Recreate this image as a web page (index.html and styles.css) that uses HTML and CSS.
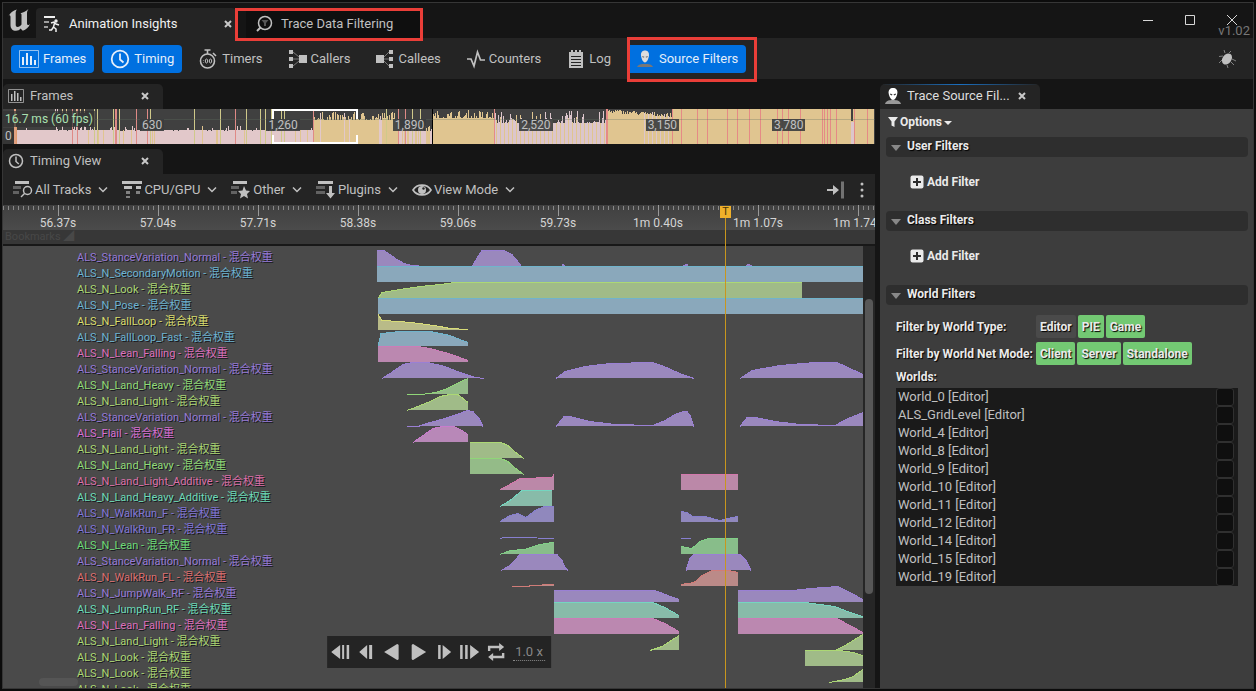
FILE: index.html
```html
<!DOCTYPE html>
<html lang="en">
<head>
<meta charset="utf-8">
<title>Animation Insights</title>
<link rel="stylesheet" href="styles.css">
</head>
<body>
<div class="window">
  <header class="titlebar">
    <svg class="logo" viewBox="0 0 24 24" aria-label="Unreal Engine"><path d="M1.500 8.500C3 5 6 2.500 10 1.500C8.700 3 8.700 4 8.700 5.500V16.500C8.700 18.300 9.500 19 10.600 19C12 19 13.500 18 14.500 16.500V7C14.500 6 14.200 5.500 13.200 5.500C15.500 4.800 18.500 3.500 21.500 1C20.500 2.500 20 3.500 20 5V15C20 16.500 20.500 17 21.200 17C22 17 22.500 16.500 23 16C21.500 19.500 19 21.800 15.800 22.800L13.500 20.600C12.500 22 11 22.800 9 22.800C5.500 22.800 3.500 20.500 3.500 17V9C3.500 7.800 3 7.300 2.500 7.300C2 7.300 1.800 7.800 1.500 8.500Z"/></svg>
    <nav class="main-tabs">
      <div class="main-tab main-tab-active">
        <svg class="icon" viewBox="0 0 20 20"><g fill="none" stroke="currentColor" stroke-width="2"><path d="M2 3H13"/><path d="M2 8H7" opacity=".6"/><path d="M2 13H6" opacity=".6"/></g><circle cx="14" cy="7" r="1.700"/><path d="M9 9L12 8L14 10L17 11M12.500 9L11.500 13L14 15V18M11.500 13L9.500 16H7" fill="none" stroke="currentColor" stroke-width="1.500"/></svg>
        <span class="main-tab-label">Animation Insights</span>
        <button class="close" aria-label="Close Animation Insights"><svg viewBox="0 0 8 8"><path d="M1 1L7 7M7 1L1 7"/></svg></button>
      </div>
      <div class="main-tab main-tab-idle marked">
        <svg class="icon" viewBox="0 0 20 20"><circle cx="11" cy="9" r="6.500" fill="none" stroke="currentColor" stroke-width="1.500"/><path d="M6.500 13.500L3 17" stroke="currentColor" stroke-width="2"/><path d="M7.500 6H14.500L12 9V12H10V9Z" opacity=".4"/></svg>
        <span>Trace Data Filtering</span>
      </div>
    </nav>
    <div class="window-buttons">
      <button aria-label="Minimize"><svg viewBox="0 0 12 12"><path d="M1 6.500H11"/></svg></button>
      <button aria-label="Maximize"><svg viewBox="0 0 12 12"><path d="M1.500 1.500H10.500V10.500H1.500Z"/></svg></button>
      <button aria-label="Close"><svg viewBox="0 0 12 12"><path d="M1 1L11 11M11 1L1 11"/></svg></button>
      <span class="version">v1.02</span>
    </div>
  </header>

  <div class="toolbar">
    <button class="tool tool-on"><svg class="icon" viewBox="0 0 20 20"><path d="M.5 1.500H19.500V18.500H.5Z" fill="none" stroke="currentColor" opacity=".65"/><path d="M3 8H5V16H3ZM7 4H9V16H7ZM11 7H13V16H11ZM15 11H17V16H15Z"/></svg>Frames</button>
    <button class="tool tool-on"><svg class="icon" viewBox="0 0 20 20"><g fill="none" stroke="currentColor" stroke-width="1.800"><circle cx="10" cy="10" r="8.300"/><path d="M10 4.500V10.500L13.500 13.500"/></g></svg>Timing</button>
    <button class="tool"><svg class="icon" viewBox="0 0 20 20"><g fill="none" stroke="currentColor" stroke-width="1.600"><circle cx="9.500" cy="12" r="7"/><path d="M6.500 1H12.500M9.500 1V5M15 4L18 7"/><path d="M5.500 11V11.500M5.500 13V13.500" stroke-width="1.200"/><ellipse cx="8.500" cy="12" rx="1.200" ry="2" stroke-width="1"/><ellipse cx="12.500" cy="12" rx="1.200" ry="2" stroke-width="1"/></g></svg>Timers</button>
    <button class="tool"><svg class="icon" viewBox="0 0 20 20"><path d="M2 1H6V5H2ZM2 8H6V12H2ZM2 15H6V19H2ZM12 6H20V14H12Z"/><path d="M6 3L12 8M6 10H12M6 17L12 12" stroke="currentColor" opacity=".55"/></svg>Callers</button>
    <button class="tool"><svg class="icon" viewBox="0 0 20 20"><path d="M15 1H19V5H15ZM15 8H19V12H15ZM15 15H19V19H15ZM2 6H10V14H2Z"/><path d="M15 3L10 8M15 10H10M15 17L10 12" stroke="currentColor" opacity=".55"/></svg>Callees</button>
    <button class="tool"><svg class="icon" viewBox="0 0 20 20"><path d="M2 10H6L9 17L12.500 3L15.500 11H20" fill="none" stroke="currentColor" stroke-width="1.700"/></svg>Counters</button>
    <button class="tool"><svg class="icon" viewBox="0 0 20 20"><path d="M4 3H18V19H4Z"/><path d="M7 1V5M11 1V5M15 1V5" stroke="currentColor" stroke-width="2"/><path d="M6 7.500H16M6 10.500H16M6 13.500H16M6 16.500H16" stroke="#242424"/></svg>Log</button>
    <button class="tool tool-on marked"><svg class="icon" viewBox="0 0 20 20"><path d="M2 18C3 15.500 6 15 10 15S17 15.500 18 18Z" fill="#777"/><path d="M10 1.500C13 1.500 14.300 3.800 14 6.500C13.700 9.500 12 13.500 10 13.500S6.300 9.500 6 6.500C5.700 3.800 7 1.500 10 1.500Z" fill="#ddd"/><path d="M7.300 7.500L9.200 8.300M12.700 7.500L10.800 8.300" stroke="#777" stroke-width="1.200"/></svg>Source Filters</button>
    <button class="bug" aria-label="Debug"><svg viewBox="0 0 20 20"><ellipse cx="10" cy="10" rx="4.500" ry="6" transform="rotate(35 10 10)"/><path d="M6 7L2 7.500M5 11L2 14M8 4L7 1M12 4L14 2M15 10L19 12M14 13L17 16M10 16L11 19" stroke="currentColor" opacity=".6"/></svg></button>
  </div>

  <main class="workspace">
    <section class="left">
      <div class="panel-tab">
        <svg class="tab-icon" viewBox="0 0 16 16"><path d="M.5 1.500H15.500V14.500H.5Z" fill="none" stroke="currentColor" opacity=".7"/><path d="M3 6H4.500V13H3ZM6 3H7.500V13H6ZM9 5H10.500V13H9ZM12 9H13.500V13H12Z"/></svg>
        <span>Frames</span>
        <button class="close" aria-label="Close Frames"><svg viewBox="0 0 8 8"><path d="M1 1L7 7M7 1L1 7"/></svg></button>
      </div>
      <div class="frames">
        <svg class="frames-plot" id="frames-plot" viewBox="3 0 872 35" preserveAspectRatio="none" aria-hidden="true"></svg>
        <div class="frames-ticks"><span>630</span><span>1,260</span><span>1,890</span><span>2,520</span><span>3,150</span><span>3,780</span></div>
        <div class="frames-scale"><span class="fps">16.7 ms (60 fps)</span><span>0</span></div>
      </div>

      <div class="panel-tab panel-tab-second">
        <svg class="tab-icon" viewBox="0 0 16 16"><g fill="none" stroke="currentColor" stroke-width="1.500"><circle cx="8" cy="8" r="6.500"/><path d="M8 3.500V8.500L10.800 11"/></g></svg>
        <span>Timing View</span>
        <button class="close" aria-label="Close Timing View"><svg viewBox="0 0 8 8"><path d="M1 1L7 7M7 1L1 7"/></svg></button>
      </div>
      <div class="view-bar">
        <button class="menu"><svg class="icon" viewBox="0 0 20 20"><path d="M2 1H16V4H2Z"/><path d="M0 6H8V9H0ZM0 11H6V14H0Z" opacity=".4"/><circle cx="14.500" cy="10.500" r="4" fill="none" stroke="currentColor" stroke-width="1.500"/><path d="M11.500 13.500L8 17" stroke="currentColor" stroke-width="1.500"/></svg>All Tracks<svg class="chevron" viewBox="0 0 10 6"><path d="M1 .5L5 4.500L9 .5"/></svg></button>
        <button class="menu"><svg class="icon" viewBox="0 0 20 20"><path d="M0 1H20V4H0ZM2 6H10V9H2ZM14 6H19V9H14Z"/><path d="M4 11H8V14H4ZM14 11H18V14H14ZM4 16H8V18H4Z" opacity=".6"/></svg>CPU/GPU<svg class="chevron" viewBox="0 0 10 6"><path d="M1 .5L5 4.500L9 .5"/></svg></button>
        <button class="menu"><svg class="icon" viewBox="0 0 20 20"><path d="M2 1H16V4H2Z"/><path d="M0 6H8V9H0ZM0 11H6V14H0Z" opacity=".4"/><path d="M13 6L15 10.500L19 11L16 14L17 18.500L13 16L9 18.500L10 14L7 11L11.500 10.500Z"/></svg>Other<svg class="chevron" viewBox="0 0 10 6"><path d="M1 .5L5 4.500L9 .5"/></svg></button>
        <button class="menu"><svg class="icon" viewBox="0 0 20 20"><path d="M2 1H17V4H2Z"/><path d="M0 6H9V9H0ZM0 11H9V14H0Z" opacity=".4"/><path d="M13 6H16V13H19L14.500 18.500L10 13H13Z"/></svg>Plugins<svg class="chevron" viewBox="0 0 10 6"><path d="M1 .5L5 4.500L9 .5"/></svg></button>
        <button class="menu"><svg class="icon" viewBox="0 0 20 20"><path d="M1 10C5 3.500 15 3.500 19 10C15 16.500 5 16.500 1 10Z" fill="none" stroke="currentColor" stroke-width="1.700"/><circle cx="10" cy="10" r="4"/><circle cx="11.500" cy="8.500" r="1.200" fill="#242424"/></svg>View Mode<svg class="chevron" viewBox="0 0 10 6"><path d="M1 .5L5 4.500L9 .5"/></svg></button>
        <button class="autoscroll" aria-label="Auto scroll"><svg viewBox="0 0 20 20"><path d="M1 9H7V5L13 10L7 15V11H1Z"/><path d="M15 1.500H18V18.500H15Z" opacity=".5"/></svg></button>
        <button class="more" aria-label="More"><svg viewBox="0 0 4 16"><circle cx="2" cy="2" r="1.500"/><circle cx="2" cy="8" r="1.500"/><circle cx="2" cy="14" r="1.500"/></svg></button>
      </div>

      <div class="timeline">
        <div class="ruler"><span>56.37s</span><span>57.04s</span><span>57.71s</span><span>58.38s</span><span>59.06s</span><span>59.73s</span><span>1m 0.40s</span><span>1m 1.07s</span><span>1m 1.74s</span></div>
        <div class="bookmarks">Bookmarks ◢</div>
        <div class="tracks">
          <svg class="curves" id="curves" viewBox="3 0 860 442" preserveAspectRatio="none" aria-hidden="true"></svg>
          <ul class="track-names">
            <li class="purple">ALS_StanceVariation_Normal - 混合权重</li>
            <li class="blue">ALS_N_SecondaryMotion - 混合权重</li>
            <li class="lime">ALS_N_Look - 混合权重</li>
            <li class="blue">ALS_N_Pose - 混合权重</li>
            <li class="yellow">ALS_N_FallLoop - 混合权重</li>
            <li class="blue">ALS_N_FallLoop_Fast - 混合权重</li>
            <li class="pink">ALS_N_Lean_Falling - 混合权重</li>
            <li class="purple">ALS_StanceVariation_Normal - 混合权重</li>
            <li class="grass">ALS_N_Land_Heavy - 混合权重</li>
            <li class="lime">ALS_N_Land_Light - 混合权重</li>
            <li class="purple">ALS_StanceVariation_Normal - 混合权重</li>
            <li class="magenta">ALS_Flail - 混合权重</li>
            <li class="lime">ALS_N_Land_Light - 混合权重</li>
            <li class="grass">ALS_N_Land_Heavy - 混合权重</li>
            <li class="rose">ALS_N_Land_Light_Additive - 混合权重</li>
            <li class="teal">ALS_N_Land_Heavy_Additive - 混合权重</li>
            <li class="violet">ALS_N_WalkRun_F - 混合权重</li>
            <li class="violet">ALS_N_WalkRun_FR - 混合权重</li>
            <li class="green">ALS_N_Lean - 混合权重</li>
            <li class="purple">ALS_StanceVariation_Normal - 混合权重</li>
            <li class="red">ALS_N_WalkRun_FL - 混合权重</li>
            <li class="purple">ALS_N_JumpWalk_RF - 混合权重</li>
            <li class="teal">ALS_N_JumpRun_RF - 混合权重</li>
            <li class="pink">ALS_N_Lean_Falling - 混合权重</li>
            <li class="lime">ALS_N_Land_Light - 混合权重</li>
            <li class="lime">ALS_N_Look - 混合权重</li>
            <li class="lime">ALS_N_Look - 混合权重</li>
            <li class="lime">ALS_N_Look - 混合权重</li>
          </ul>
          <div class="v-scroll"><div class="v-thumb"></div></div>
          <div class="h-thumb"></div>
          <div class="playback">
            <button aria-label="Play reverse frame group"><svg class="w20" viewBox="0 0 20 16"><path d="M0 8L9 1V15ZM11 1H13V15H11ZM15.500 1H18V15H15.500Z"/></svg></button>
            <button aria-label="Step back"><svg class="w14" viewBox="0 0 14 16"><path d="M0 8L8 1V15ZM10 1H13V15H10Z"/></svg></button>
            <button aria-label="Play reverse"><svg class="w16" viewBox="0 0 16 18"><path d="M1 9L14 1Q15.500 1 15.500 2.500V15.500Q15.500 17 14 17Z"/></svg></button>
            <button aria-label="Play"><svg class="w16" viewBox="0 0 16 18"><path d="M15 9L2 1Q.5 1 .5 2.500V15.500Q.5 17 2 17Z"/></svg></button>
            <button aria-label="Step forward"><svg class="w14" viewBox="0 0 14 16"><path d="M1 1H3.500V15H1ZM5.500 1L14 8L5.500 15Z"/></svg></button>
            <button aria-label="Play frame group"><svg class="w20" viewBox="0 0 20 16"><path d="M1 1H3.500V15H1ZM6 1H8.500V15H6ZM11 1L20 8L11 15Z"/></svg></button>
            <button aria-label="Loop"><svg class="w18" viewBox="0 0 18 18"><path d="M2 8V4H14M16 10V14H4" fill="none" stroke="currentColor" stroke-width="2.400"/><path d="M12 0L17 4L12 8ZM6 10L1 14L6 18Z"/></svg></button>
            <button class="speed">1.0 x</button>
          </div>
        </div>
        <div class="marker"><span class="marker-flag">T</span></div>
      </div>
    </section>

    <aside class="right">
      <div class="panel-tab panel-tab-focus">
        <svg class="tab-icon" viewBox="0 0 16 16"><path d="M0 16C1 12.500 4 12 8 12S15 12.500 16 16Z" fill="#999"/><path d="M8 0C11 0 12.700 2 12.400 5C12 8.500 10 12 8 12S4 8.500 3.600 5C3.300 2 5 0 8 0Z" fill="#fff"/><path d="M5.200 6L7.200 7M10.800 6L8.800 7" stroke="#333" stroke-width="1.300"/></svg>
        <span>Trace Source Fil...</span>
        <button class="close" aria-label="Close Trace Source Filters"><svg viewBox="0 0 8 8"><path d="M1 1L7 7M7 1L1 7"/></svg></button>
      </div>
      <div class="filters">
        <button class="options"><svg class="funnel" viewBox="0 0 10 10"><path d="M0 0H10L6.500 4.500V10L3.500 8.500V4.500Z"/></svg>Options<svg class="caret" viewBox="0 0 8 4"><path d="M0 0H8L4 4Z"/></svg></button>
        <section>
          <h2 class="group"><svg class="fold" viewBox="0 0 10 6"><path d="M0 0H10L5 6Z"/></svg>User Filters</h2>
          <div class="add-row"><button class="add"><svg viewBox="0 0 14 14"><rect x=".5" y=".5" width="13" height="13" rx="2"/><path d="M7 3V11M3 7H11" stroke="#2c2c2c" stroke-width="2"/></svg>Add Filter</button></div>
        </section>
        <section>
          <h2 class="group"><svg class="fold" viewBox="0 0 10 6"><path d="M0 0H10L5 6Z"/></svg>Class Filters</h2>
          <div class="add-row"><button class="add"><svg viewBox="0 0 14 14"><rect x=".5" y=".5" width="13" height="13" rx="2"/><path d="M7 3V11M3 7H11" stroke="#2c2c2c" stroke-width="2"/></svg>Add Filter</button></div>
        </section>
        <section>
          <h2 class="group"><svg class="fold" viewBox="0 0 10 6"><path d="M0 0H10L5 6Z"/></svg>World Filters</h2>
          <div class="world-body">
            <div class="toggle-row"><span class="toggle-label">Filter by World Type:</span><button class="toggle">Editor</button><button class="toggle toggle-on">PIE</button><button class="toggle toggle-on">Game</button></div>
            <div class="toggle-row"><span class="toggle-label">Filter by World Net Mode:</span><button class="toggle toggle-on">Client</button><button class="toggle toggle-on">Server</button><button class="toggle toggle-on">Standalone</button></div>
            <div class="worlds-title">Worlds:</div>
            <div class="worlds">
              <label>World_0 [Editor]<input type="checkbox"></label>
              <label>ALS_GridLevel [Editor]<input type="checkbox"></label>
              <label>World_4 [Editor]<input type="checkbox"></label>
              <label>World_8 [Editor]<input type="checkbox"></label>
              <label>World_9 [Editor]<input type="checkbox"></label>
              <label>World_10 [Editor]<input type="checkbox"></label>
              <label>World_11 [Editor]<input type="checkbox"></label>
              <label>World_12 [Editor]<input type="checkbox"></label>
              <label>World_14 [Editor]<input type="checkbox"></label>
              <label>World_15 [Editor]<input type="checkbox"></label>
              <label>World_19 [Editor]<input type="checkbox"></label>
            </div>
          </div>
        </section>
      </div>
    </aside>
  </main>
</div>
<script src="charts.js"></script>
</body>
</html>
```
FILE: styles.css
```css
* { box-sizing: border-box; }
body {
  margin: 0;
  height: 100vh;
  padding: 2px 2px 2px;
  background: #0c0c0c;
  color: #c0c0c0;
  font: 13px/16px Roboto, "Noto Sans CJK SC", sans-serif;
}
button {
  margin: 0;
  padding: 0;
  border: 0;
  background: none;
  color: inherit;
  font: inherit;
  display: flex;
  align-items: center;
}
svg { display: block; flex: none; fill: currentColor; }
h2, ul { margin: 0; padding: 0; list-style: none; }
.icon { width: 20px; height: 20px; }

.window {
  height: 100%;
  display: flex;
  flex-direction: column;
  border: 1px solid #363636;
  background: #151515;
}

/* title bar */
.titlebar { display: flex; height: 35px; }
.logo { width: 24px; height: 24px; margin: 5px 5px 0 4px; }
.main-tabs { display: flex; flex: 1; align-items: flex-end; gap: 10px; }
.main-tab { display: flex; align-items: center; height: 30px; padding: 2px 4px 0 6px; }
.main-tab-active {
  width: 200px;
  gap: 7px;
  border-radius: 4px 4px 0 0;
  background: #242424;
  color: #f0f0f0;
}
.main-tab-label { flex: 1; }
.main-tab-idle { width: 177px; gap: 7px; padding-left: 8px; background: #0f0f0f; }
.close svg { width: 8px; height: 8px; }
.close path { fill: none; stroke: #c8c8c8; stroke-width: 2; }
.marked { position: relative; }
.marked::after {
  content: "";
  position: absolute;
  border: 3px solid #ea3e38;
  pointer-events: none;
}
.main-tab.marked::after { inset: 0 0 -3px -11px; }
.tool.marked::after { inset: -8px -11px -9px 0; }
.tool.marked { border-radius: 0 4px 4px 0; }
.window-buttons { position: relative; display: flex; gap: 30px; padding: 11px 15px 0 0; align-items: flex-start; }
.window-buttons svg { width: 12px; height: 12px; }
.window-buttons path { fill: none; stroke: #d8d8d8; }
.version { position: absolute; right: 3px; top: 20px; color: #777; }

/* main toolbar */
.toolbar {
  display: flex;
  align-items: center;
  gap: 8px;
  height: 41px;
  padding: 0 16px 0 8px;
  background: #242424;
}
.tool { gap: 4px; height: 28px; padding: 0 8px; border-radius: 4px; }
.tool-on { background: #0070e0; color: #e4eefa; }
.bug { margin-left: auto; }
.bug svg { width: 20px; height: 20px; }

/* workspace */
.workspace {
  flex: 1;
  min-height: 0;
  display: grid;
  grid-template-columns: minmax(0, 1fr) 373px;
  gap: 5px;
  padding-top: 5px;
}
.left, .right { display: flex; flex-direction: column; min-width: 0; min-height: 0; }
.panel-tab {
  display: flex;
  align-items: center;
  flex: none;
  gap: 6px;
  width: 160px;
  height: 25px;
  padding: 0 14px 2px 5px;
  border-radius: 5px 5px 0 0;
  background: #242424;
}
.panel-tab span { flex: 1; white-space: nowrap; }
.tab-icon { width: 16px; height: 16px; }
.panel-tab-second { margin-top: 5px; }

/* frames plot */
.frames { display: grid; height: 35px; background: #404040; }
.frames > * { grid-area: 1 / 1; min-width: 0; }
.frames-plot { width: 100%; height: 35px; }
.frames-ticks {
  display: grid;
  grid-template-columns: repeat(6, 17.2%);
  padding: 0 0 3px 137px;
  place-items: center start;
  font-size: 12px;
  line-height: 12px;
}
.frames-ticks span { padding: 0 2px; background: #3a3c3ee6; }
.frames-scale {
  display: flex;
  flex-direction: column;
  justify-content: space-between;
  align-items: flex-start;
  padding: 2px 0 0;
  font-size: 12px;
}
.frames-scale span { padding: 0 2px; background: #333b; }
.frames-scale .fps { color: #a9e0b0; }

/* timing view */
.view-bar {
  display: flex;
  align-items: center;
  flex: none;
  gap: 14px;
  height: 31px;
  padding: 0 11px 0 10px;
  background: #242424;
}
.menu { gap: 2px; }
.chevron { width: 10px; height: 6px; margin-left: 5px; }
.chevron path { fill: none; stroke: currentColor; stroke-width: 1.5; }
.autoscroll { margin-left: auto; }
.autoscroll svg { width: 20px; height: 20px; }
.more svg { width: 4px; height: 16px; }
.timeline { position: relative; flex: 1; min-height: 0; display: flex; flex-direction: column; }
.ruler {
  display: flex;
  flex: none;
  height: 25px;
  padding: 10px 0 0 5px;
  overflow: hidden;
  font-size: 12px;
  color: #d4d4d4;
  background:
    repeating-linear-gradient(90deg, #999 0 1px, transparent 1px 100px) 55px 0 / 100% 11px no-repeat,
    repeating-linear-gradient(90deg, #888 0 1px, transparent 1px 5px) 0 1px / 100% 4px no-repeat,
    linear-gradient(#404040, #4b4b4b);
}
.ruler span { flex: 0 0 100px; text-align: center; white-space: nowrap; }
.bookmarks {
  flex: none;
  height: 16px;
  padding-left: 2px;
  border-bottom: 2px solid #181818;
  background: #373737;
  color: #484848;
  font-size: 11px;
  line-height: 14px;
}
.tracks { position: relative; flex: 1; min-height: 0; overflow: hidden; background: #4a4a4a; }
.curves { position: absolute; top: 0; left: 0; width: calc(100% - 12px); height: 442px; }
.track-names {
  position: relative;
  padding: 4px 0 0 74px;
  font-size: 11px;
  text-shadow: 1px 1px 0 #16161c;
}
.v-scroll { position: absolute; inset: 0 0 0 auto; width: 12px; padding: 53px 2px 94px; background: #262626; }
.v-thumb { height: 100%; border-radius: 4px; background: #575757; }
.h-thumb { position: absolute; left: 36px; bottom: 2px; width: 39px; height: 8px; border-radius: 4px; background: #555; }
.playback {
  position: absolute;
  left: 50%;
  bottom: 20px;
  transform: translateX(-50%);
  display: flex;
  align-items: center;
  gap: 8px;
  height: 32px;
  padding: 0 6px 0 4px;
  background: #242424;
}
.w14 { width: 14px; height: 16px; }
.w16 { width: 16px; height: 18px; margin: 0 2px; }
.w18 { width: 18px; height: 18px; }
.w20 { width: 20px; height: 16px; }
.playback .speed { padding: 0 2px; border-bottom: 1px dotted #888; color: #888; white-space: nowrap; }
.marker { position: absolute; top: 1px; bottom: 0; left: 82.8%; width: 1px; background: #c8961e; }
.marker-flag {
  position: absolute;
  left: -5px;
  width: 11px;
  height: 12px;
  background: #efb02a;
  color: #4a3505;
  font-size: 11px;
  line-height: 12px;
  text-align: center;
}

.purple { color: #967ad8; fill: #9a88bd; stroke: #9a80d4; }
.violet { color: #8176d8; fill: #9088bd; stroke: #877fd0; }
.blue { color: #6cb4d2; fill: #8aa8bb; stroke: #70b4cc; }
.lime { color: #acd874; fill: #a0bb88; stroke: #acd874; }
.grass { color: #90dc78; fill: #94bb88; stroke: #90d678; }
.green { color: #6cdc78; fill: #88bd8a; stroke: #80d086; }
.yellow { color: #dade6e; fill: #b9bb88; stroke: #d8dc78; }
.pink { color: #dc70bc; fill: #bb88b0; stroke: #cc7cb8; }
.rose { color: #dc70a8; fill: #bb88a8; stroke: #d478ac; }
.magenta { color: #d870d4; fill: #b888b8; stroke: #c87ccc; }
.teal { color: #6cdcb8; fill: #88bba9; stroke: #74d6c0; }
.red { color: #dc7070; fill: #bb8a88; stroke: #d07c78; }

/* trace source filters */
.panel-tab-focus { background: linear-gradient(90deg, transparent, #1a6fc0, transparent) 0 0 / 100% 1px no-repeat #242424; color: #ddd; }
.filters {
  flex: 1;
  padding: 5px 5px 0 6px;
  background: #3d3d3d;
  color: #eaeaea;
  font-size: 12px;
  font-weight: 700;
  text-shadow: 1px 1px 1px #000;
}
.options { gap: 2px; height: 16px; margin: 0 0 7px 2px; }
.funnel { width: 10px; height: 10px; }
.caret { width: 8px; height: 4px; margin-top: 2px; }
.group {
  display: flex;
  align-items: center;
  gap: 6px;
  height: 20px;
  padding: 0 5px 2px;
  border-radius: 4px;
  background: #2e2e2e;
  font-size: 12px;
}
.fold { width: 10px; height: 6px; margin-top: 3px; color: #888; }
.add-row { padding: 13px 24px 17px; }
.add { gap: 3px; height: 24px; }
.add svg { width: 14px; height: 14px; }
.world-body { padding: 10px 10px 0; }
.toggle-row { display: flex; gap: 2px; height: 23px; margin-bottom: 4px; align-items: center; }
.toggle-label { width: 138px; white-space: nowrap; }
.toggle { height: 23px; padding: 0 4px; border-radius: 2px; background: #4a4a4a; text-shadow: inherit; }
.toggle-on { background: #73c973; }
.worlds-title { height: 19px; line-height: 17px; }
.worlds { background: #1a1a1a; color: #c0c0c0; font-size: 13px; font-weight: 400; text-shadow: none; }
.worlds label { display: flex; align-items: center; justify-content: space-between; height: 18px; padding: 0 4px 0 2px; }
.worlds input {
  appearance: none;
  width: 18px;
  height: 18px;
  margin: 0;
  border: 1px solid #303030;
  border-radius: 3px;
  background: #0f0f0f;
}
```
FILE: charts.js
```js
const NS = "http://www.w3.org/2000/svg";

function add(svg, name, attributes) {
  const node = document.createElementNS(NS, name);
  for (const key in attributes) node.setAttribute(key, attributes[key]);
  svg.appendChild(node);
}

/* Blend weight curves: [track row, colour class, then x, height pairs] */
const curves = [
  [0, "purple", 377,16, 384,16, 390,12, 397,7, 404,3, 412,1, 419,1],
  [0, "purple", 472,0, 478,10, 482,16, 504,16, 512,12, 521,1],
  [0, "purple", 562,2, 565,1],
  [0, "purple", 683,1, 688,2],
  [0, "purple", 746,1, 748,2, 752,1],
  [1, "blue", 377,16, 863,16],
  [2, "lime", 378,0, 382,6, 400,9, 420,12, 440,14, 455,16, 802,16],
  [3, "blue", 378,16, 863,16],
  [4, "yellow", 378,16, 382,10, 400,9, 420,7, 440,4, 450,2, 468,1],
  [5, "blue", 378,0, 381,13, 400,15, 430,15, 440,13, 450,11, 460,7, 468,4],
  [6, "pink", 378,16, 418,16, 430,14, 445,10, 455,7, 462,4, 468,2],
  [7, "purple", 382,0, 390,5, 403,14, 413,16, 428,16, 445,12, 460,6, 475,1, 484,0],
  [7, "purple", 556,0, 565,7, 585,12, 610,15, 652,16, 662,13, 673,8, 685,3, 694,0],
  [7, "purple", 740,0, 752,8, 780,13, 815,16, 837,16, 850,10, 863,4],
  [8, "grass", 407,0, 422,0, 435,2, 445,5, 455,10, 463,14, 468,16],
  [9, "lime", 407,0, 415,3, 430,9, 440,14, 450,16, 458,16, 463,12, 468,8],
  [10, "purple", 407,0, 418,0, 430,4, 445,8, 460,13, 467,16, 473,15, 479,8, 483,0],
  [10, "purple", 556,0, 564,10, 570,10, 590,5, 615,2, 653,1, 665,6, 675,12, 683,15, 687,15, 690,11, 694,0],
  [10, "purple", 740,0, 747,9, 755,9, 775,5, 800,2, 835,1, 848,8, 863,14],
  [11, "magenta", 413,0, 423,7, 433,14, 443,16, 454,16, 462,12, 468,8],
  [12, "lime", 470,16, 501,16, 508,13, 517,5, 524,0],
  [13, "grass", 470,16, 501,16, 508,13, 517,5, 524,0],
  [14, "rose", 500,1, 508,5, 520,12, 552,13, 554,16],
  [14, "rose", 681,16, 738,16],
  [15, "teal", 500,0, 510,6, 522,16, 552,16],
  [16, "violet", 500,1, 510,7, 518,9, 526,5, 535,12, 544,16, 554,16],
  [16, "violet", 681,11, 687,10, 693,6, 705,6, 720,2, 727,4, 738,6],
  [17, "violet", 500,0, 504,1, 520,1, 554,0],
  [17, "violet", 681,0, 691,0],
  [18, "green", 500,0, 510,4, 525,5, 536,9, 545,11, 554,12],
  [18, "green", 681,8, 692,6, 700,13, 708,16, 738,16],
  [19, "purple", 501,0, 510,5, 520,16, 557,16, 562,10, 565,3, 568,0],
  [19, "purple", 686,0, 690,12, 694,16, 740,16, 746,10, 751,0],
  [20, "red", 512,0, 529,0, 530,1, 554,2],
  [20, "red", 681,2, 694,4, 702,11, 712,16, 728,16, 738,14],
  [21, "purple", 554,12, 655,12, 668,7, 679,3],
  [21, "purple", 738,12, 793,12, 810,14, 838,16, 848,11, 863,3],
  [22, "teal", 554,16, 653,16, 665,11, 679,3],
  [22, "teal", 738,16, 805,16, 835,12, 850,6, 863,2],
  [23, "pink", 554,16, 653,16, 665,11, 679,3],
  [23, "pink", 738,16, 837,16, 850,9, 863,2],
  [24, "lime", 650,0, 662,4, 679,15],
  [24, "lime", 835,0, 845,5, 863,16],
  [25, "lime", 805,16, 840,16, 853,14, 863,11],
  [26, "lime", 829,0, 845,3, 853,6, 863,13]
];

const curveSvg = document.getElementById("curves");
for (const [row, colour, ...v] of curves) {
  const base = 20 + row * 16;
  let points = "";
  let line = "";
  for (let i = 0; i < v.length; i += 2) {
    points += `${v[i]},${base - v[i + 1]} `;
    line += `${v[i]},${Math.min(base - v[i + 1] + 0.5, base + 0.5)} `;
  }
  add(curveSvg, "polygon", {
    class: colour,
    style: "stroke:none",
    points: `${v[0]},${base} ${points}${v[v.length - 2]},${base}`,
    "shape-rendering": "crispEdges"
  });
  add(curveSvg, "polyline", {
    class: colour,
    style: "fill:none",
    points: line,
    "shape-rendering": "crispEdges"
  });
}

/* Frame durations, one bar per pixel column */
const frameSvg = document.getElementById("frames-plot");
let seed = 7;
const random = () => (seed = (seed * 16807) % 2147483647) / 2147483647;
const bar = (x, h, fill, w = 1) => add(frameSvg, "rect", { x, y: 35 - h, width: w, height: h, fill });
const pink = "#e2c8ca", tan = "#e0c590", red = "#df8a86", lilac = "#dcc6cc", olive = "#cfc98a";

for (let x = 15; x < 874; x++) {
  const r = random();
  const r2 = random();
  if (x < 313) bar(x, 13 + (r < 0.3 ? Math.floor(r2 * 6) : 1), r2 > 0.93 ? tan : pink);
  else if (x < 398) bar(x, 24 + Math.floor(r * r * 9), r2 > 0.92 ? pink : tan);
  else if (x < 432) bar(x, 13 + Math.floor(r * 6), r2 > 0.6 ? tan : pink);
  else if (x === 432) bar(x, 35, "#000");
  else if (x < 494) bar(x, 26 + Math.floor(r * r * r * 9), tan);
  else if (x < 606) bar(x, 21 + Math.floor(r * r * r * 13), x % 4 === 0 ? tan : lilac);
  else if (x < 672) bar(x, 27 + Math.floor((672 - x) / 14 + r * 4), x > 640 && x % 4 === 0 ? lilac : tan);
  else bar(x, 35, tan);
}
for (const x of [94, 97, 113, 119, 150, 194, 220, 246, 260, 265, 271, 281, 284, 386, 412, 420]) bar(x, 35, olive);
for (const x of [72, 136, 147, 235, 313, 398, 405]) bar(x, 35, red);
for (const x of [77, 115, 116]) bar(x, 35, red, 1);
bar(14, 17, "#e09a6c", 3);
bar(14, 35, "#e0a080", 2);
for (const x of [55, 57, 62, 66, 76, 80, 84]) add(frameSvg, "rect", { x, y: 0, width: 1, height: 4, fill: x % 2 ? pink : tan });
for (const x of [494, 606, 607, 672, 681, 697, 707, 727, 737, 749, 760, 777, 782, 788, 800, 822, 824, 827, 830, 836, 854, 867]) bar(x, 35, "#e58a86");
bar(851, 22, lilac, 3);
add(frameSvg, "rect", { x: 851, y: 0, width: 2, height: 12, fill: "#404040" });
add(frameSvg, "rect", { x: 3, y: 10, width: 872, height: 1, fill: "#60706050" });
add(frameSvg, "path", { d: "M273 10V1H357V10M273 26V34H357V26", fill: "none", stroke: "#fff", "stroke-width": 2 });
```
